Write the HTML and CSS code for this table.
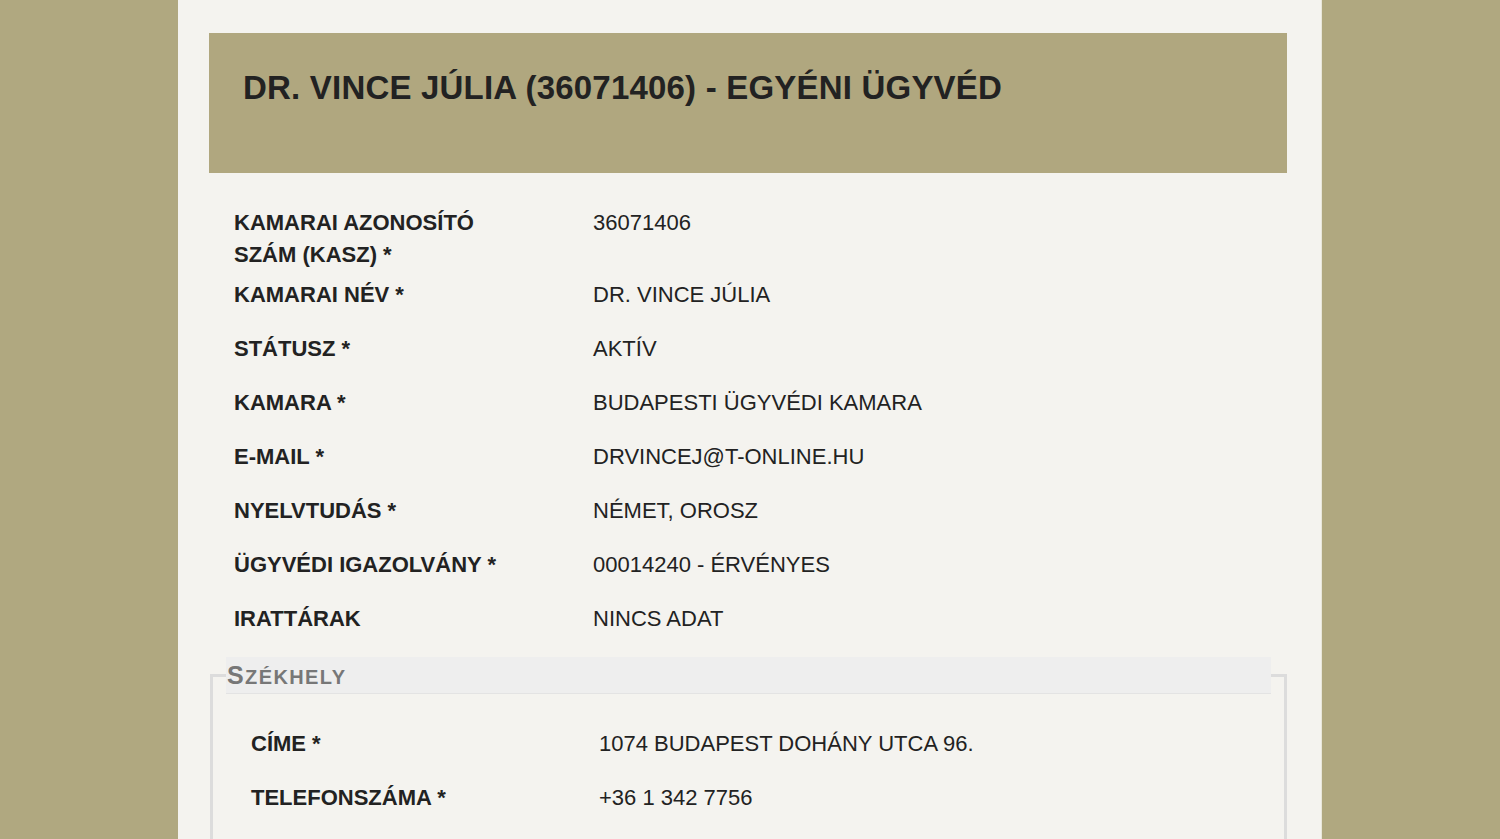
FILE: index.html
```html
<!DOCTYPE html>
<html lang="hu">
<head>
<meta charset="utf-8">
<title>Dr. Vince Júlia</title>
<link rel="stylesheet" href="styles.css">
</head>
<body>
<div class="page">
  <div class="header">
    <h1 class="title">DR. VINCE JÚLIA (36071406) - EGYÉNI ÜGYVÉD</h1>
  </div>
  <div class="details">
    <div class="row"><div class="label">KAMARAI AZONOSÍTÓ SZÁM (KASZ) *</div><div class="value">36071406</div></div>
    <div class="row"><div class="label">KAMARAI NÉV *</div><div class="value">DR. VINCE JÚLIA</div></div>
    <div class="row"><div class="label">STÁTUSZ *</div><div class="value">AKTÍV</div></div>
    <div class="row"><div class="label">KAMARA *</div><div class="value">BUDAPESTI ÜGYVÉDI KAMARA</div></div>
    <div class="row"><div class="label">E-MAIL *</div><div class="value">DRVINCEJ@T-ONLINE.HU</div></div>
    <div class="row"><div class="label">NYELVTUDÁS *</div><div class="value">NÉMET, OROSZ</div></div>
    <div class="row"><div class="label">ÜGYVÉDI IGAZOLVÁNY *</div><div class="value">00014240 - ÉRVÉNYES</div></div>
    <div class="row"><div class="label">IRATTÁRAK</div><div class="value">NINCS ADAT</div></div>
  </div>
  <fieldset class="group">
    <legend class="group-title"><span class="cap">S</span><span class="small">zékhely</span></legend>
    <div class="details inner">
      <div class="row"><div class="label">CÍME *</div><div class="value">1074 BUDAPEST DOHÁNY UTCA 96.</div></div>
      <div class="row"><div class="label">TELEFONSZÁMA *</div><div class="value">+36 1 342 7756</div></div>
    </div>
  </fieldset>
</div>
</body>
</html>
```

FILE: styles.css
```css
html, body {
  margin: 0;
  padding: 0;
}
body {
  background: #b0a880;
  font-family: "Liberation Sans", Arial, sans-serif;
  color: #222;
}
.page {
  width: 1144px;
  height: 839px;
  overflow: hidden;
  margin: 0 auto;
  box-sizing: border-box;
  background: #f4f3ef;
  border-right: 1px solid #e8e6da;
  padding: 33px 34px 0 31px;
}
.header {
  background: #b0a77f;
  height: 140px;
  box-sizing: border-box;
  padding: 37px 34px 0 34px;
}
.title {
  margin: 0;
  font-size: 33px;
  line-height: 36px;
  letter-spacing: 0.2px;
  font-weight: bold;
  color: #222;
}
.details {
  display: flex;
  flex-direction: column;
  padding: 30px 0 0 25px;
}
.row {
  display: grid;
  grid-template-columns: 359px 1fr;
  min-height: 54px;
  box-sizing: border-box;
  padding: 4px 0;
  font-size: 22px;
  line-height: 32px;
}
.label {
  font-weight: bold;
  padding-right: 60px;
}
.inner .row {
  grid-template-columns: 348px 1fr;
}
.group {
  margin: 4px 0 0 1px;
  border: 3px solid #dcdcdc;
  border-bottom: none;
  padding: 0 13px 60px 13px;
}
.group-title {
  display: block;
  width: 100%;
  box-sizing: border-box;
  background: #eeeeee;
  border-bottom: 1px solid #e3e3e3;
  height: 37px;
  padding: 0 1px;
  line-height: 37px;
  font-weight: bold;
  color: #777;
  letter-spacing: 1.4px;
}
.cap {
  font-size: 25px;
}
.small {
  font-size: 20px;
  text-transform: uppercase;
}
.inner {
  padding-top: 30px;
}
```
